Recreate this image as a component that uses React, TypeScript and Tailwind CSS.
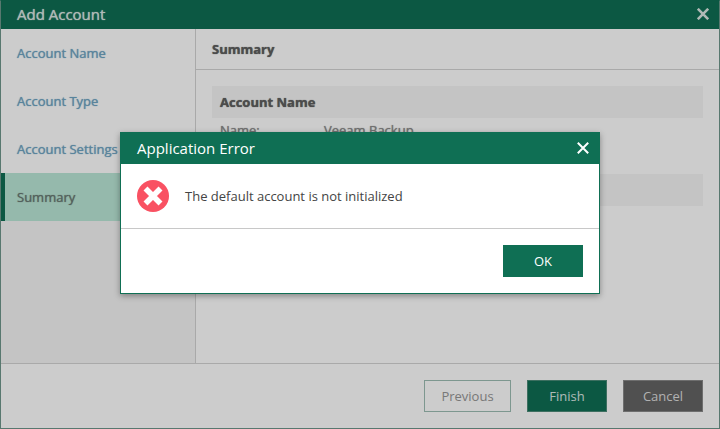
import type { ReactNode } from "react";

type Step = { label: string; state: "done" | "current" };

const STEPS: Step[] = [
  { label: "Account Name", state: "done" },
  { label: "Account Type", state: "done" },
  { label: "Account Settings", state: "done" },
  { label: "Summary", state: "current" },
];

function CloseIcon({ strokeWidth = 2 }: { strokeWidth?: number }) {
  return (
    <svg viewBox="0 0 12 12" className="w-3 h-3" fill="none" stroke="currentColor" strokeWidth={strokeWidth}>
      <path d="M0.8 0.8 L11.2 11.2 M11.2 0.8 L0.8 11.2" />
    </svg>
  );
}

function ErrorIcon() {
  return (
    <svg viewBox="0 0 32 32" className="w-8 h-8 shrink-0" aria-hidden="true">
      <circle cx="16" cy="16" r="16" fill="#f95162" />
      <path d="M8.5 8.5 L23.5 23.5 M23.5 8.5 L8.5 23.5" stroke="#fff" strokeWidth="5.6" />
    </svg>
  );
}

function StepLink({ step }: { step: Step }) {
  if (step.state === "current") {
    return (
      <a
        href="#summary"
        aria-current="step"
        className="h-12 flex items-center pl-3 border-l-4 border-[#0f6f54] bg-[#bbe8d7] text-[#6a7a74]"
      >
        {step.label}
      </a>
    );
  }
  return (
    <a href="#step" className="h-12 flex items-center pl-4 bg-white text-[#70a5c4]">
      {step.label}
    </a>
  );
}

function SectionTitle({ children }: { children?: ReactNode }) {
  return <div className="h-8 px-2 flex items-center bg-[#f6f6f6] font-bold text-[#606060]">{children}</div>;
}

function AccountWizard() {
  return (
    <div className="min-h-screen flex flex-col border border-[#6f978b] border-t-[#0f6f54] bg-white [text-shadow:0_0_1px_currentColor]">
      {/* Title bar */}
      <div className="h-7 pl-4 pr-[10px] pb-[2px] flex items-center justify-between shrink-0 bg-[#0f6f54] text-[#dce8e4]">
        <h1 className="text-[15px] leading-5">Add Account</h1>
        <button type="button" aria-label="Close">
          <CloseIcon strokeWidth={2.6} />
        </button>
      </div>

      <div className="flex-1 flex">
        <nav className="w-[195px] shrink-0 bg-[#f6f6f6] border-r border-[#d4d4d4]">
          {STEPS.map((s) => (
            <StepLink key={s.label} step={s} />
          ))}
        </nav>

        <main className="flex-1 min-w-0">
          <h2 className="h-[41px] px-4 flex items-center border-b border-[#d4d4d4] font-bold text-[#606060]">
            Summary
          </h2>
          <div className="p-4">
            <SectionTitle>Account Name</SectionTitle>
            <div className="h-14 px-2 flex items-start leading-6 text-[#8c8c8c]">
              <span className="w-[104px]">Name:</span>
              <span>Veeam Backup</span>
            </div>
            <SectionTitle />
          </div>
        </main>
      </div>

      {/* Footer */}
      <div className="p-4 flex justify-end gap-4 border-t border-[#d4d4d4]">
        <button type="button" className="w-[87px] h-8 border border-[#9dbdb3] text-[#969696]">
          Previous
        </button>
        <button type="button" className="w-20 h-8 border border-[#4d8b78] bg-[#0f6f54] text-[#dce8e4]">
          Finish
        </button>
        <button type="button" className="w-20 h-8 border border-[#8a8a8a] bg-[#646464] text-[#dedede]">
          Cancel
        </button>
      </div>
    </div>
  );
}

function ErrorDialog() {
  return (
    <div
      role="alertdialog"
      aria-labelledby="error-title"
      className="w-full max-w-[480px] border border-[#0f6f54] bg-white shadow-[0_2px_6px_rgba(0,0,0,0.35)]"
    >
      <div className="h-[31px] pl-4 pr-[10px] pb-[2px] flex items-center justify-between bg-[#0f6f54] text-white">
        <h2 id="error-title" className="text-[15px] leading-5">
          Application Error
        </h2>
        <button type="button" aria-label="Close">
          <CloseIcon />
        </button>
      </div>
      <div className="p-4 flex items-center gap-4 border-b border-[#c8c8c8] text-[#444]">
        <ErrorIcon />
        <p>The default account is not initialized</p>
      </div>
      <div className="p-4 flex justify-end">
        <button type="button" className="w-20 h-8 bg-[#0f6f54] text-white">
          OK
        </button>
      </div>
    </div>
  );
}

export default function App() {
  return (
    <div className="relative overflow-hidden font-['Open_Sans','Noto_Sans',sans-serif] text-[13px] leading-5">
      <AccountWizard />
      <div className="absolute inset-0 flex items-start justify-center pt-[132px] bg-black/20">
        <ErrorDialog />
      </div>
    </div>
  );
}
